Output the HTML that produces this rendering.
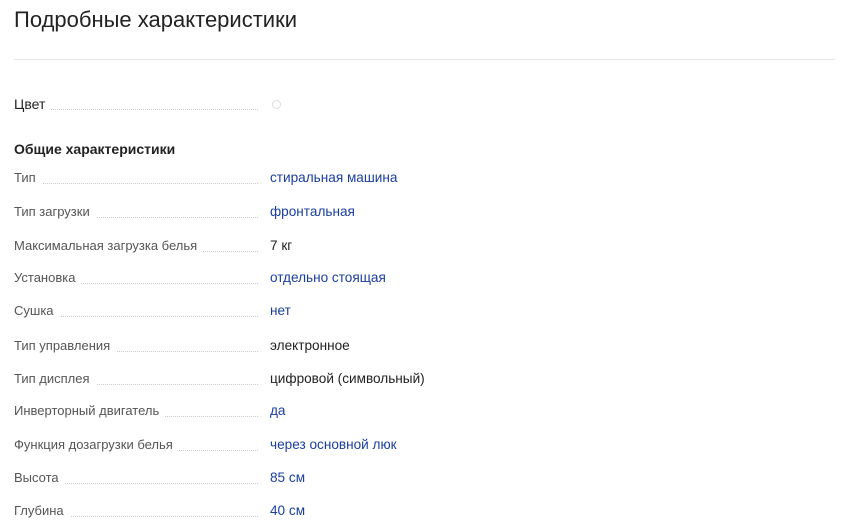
<!DOCTYPE html>
<html><head><meta charset="utf-8"><style>
body{margin:0;background:#fff;font-family:"Liberation Sans",sans-serif;width:845px;height:524px;overflow:hidden;position:relative}
h1{position:absolute;left:14px;top:7px;margin:0;font-size:22px;font-weight:normal;color:#222}
.hr{position:absolute;left:14px;right:10px;top:59px;border-top:1px solid #e6e6e6}
.row{position:absolute;left:14px;width:820px;height:20px;font-size:13px}
.l{position:absolute;left:0;top:0;color:#555;background:#fff;padding-right:6px}
.d{position:absolute;left:0;width:244px;top:13px;border-top:1px dotted #ccc}
.v{position:absolute;left:256px;top:0;font-size:13.6px;color:#1a3ea0}
.k{color:#222}
h2{position:absolute;left:14px;top:141px;margin:0;font-size:14px;font-weight:bold;color:#222}
</style></head><body>
<h1>Подробные характеристики</h1>
<div class="hr"></div>
<div class="row" style="top:96px"><div class="d"></div><span class="l" style="color:#222;font-size:14px">Цвет</span><span class="v" style="left:258px;top:4px;width:7px;height:7px;border:1px solid #ddd;border-radius:50%"></span></div>
<h2>Общие характеристики</h2>
<div class="row" style="top:170px"><div class="d"></div><span class="l">Тип</span><span class="v">стиральная машина</span></div>
<div class="row" style="top:204px"><div class="d"></div><span class="l">Тип загрузки</span><span class="v">фронтальная</span></div>
<div class="row" style="top:238px"><div class="d"></div><span class="l">Максимальная загрузка белья</span><span class="v k">7 кг</span></div>
<div class="row" style="top:270px"><div class="d"></div><span class="l">Установка</span><span class="v">отдельно стоящая</span></div>
<div class="row" style="top:303px"><div class="d"></div><span class="l">Сушка</span><span class="v">нет</span></div>
<div class="row" style="top:338px"><div class="d"></div><span class="l">Тип управления</span><span class="v k">электронное</span></div>
<div class="row" style="top:371px"><div class="d"></div><span class="l">Тип дисплея</span><span class="v k">цифровой (символьный)</span></div>
<div class="row" style="top:403px"><div class="d"></div><span class="l">Инверторный двигатель</span><span class="v">да</span></div>
<div class="row" style="top:437px"><div class="d"></div><span class="l">Функция дозагрузки белья</span><span class="v">через основной люк</span></div>
<div class="row" style="top:470px"><div class="d"></div><span class="l">Высота</span><span class="v">85 см</span></div>
<div class="row" style="top:503px"><div class="d"></div><span class="l">Глубина</span><span class="v">40 см</span></div>
</body></html>
